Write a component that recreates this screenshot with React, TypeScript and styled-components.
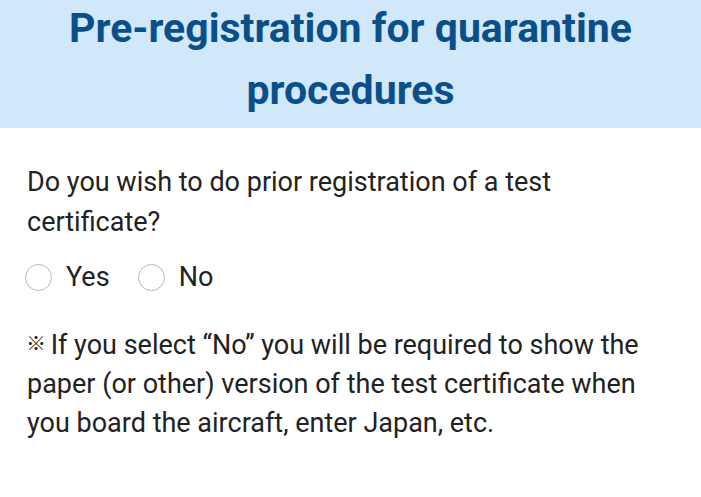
import React from "react";
import styled, { createGlobalStyle } from "styled-components";

const Global = createGlobalStyle`
  html, body { margin: 0; padding: 0; background: #ffffff; }
  body { font-family: Roboto, "Noto Sans", sans-serif; }
`;

const Page = styled.div`
  width: 701px;
  display: flex;
  flex-direction: column;
`;

const Header = styled.header`
  background: #d1e8fa;
  height: 128px;
  display: flex;
  align-items: center;
  justify-content: center;
  padding: 0 10px;
  box-sizing: border-box;
`;

const Title = styled.h1`
  margin: 0;
  font-family: Roboto, sans-serif;
  font-weight: 700;
  font-size: 41px;
  line-height: 62px;
  color: #0b4f8a;
  text-align: center;
  margin-top: -10px;
`;

const Body = styled.main`
  padding: 34px 27px 0 27px;
  display: flex;
  flex-direction: column;
`;

const Question = styled.p`
  margin: 0;
  font-size: 27px;
  line-height: 40px;
  color: #222222;
`;

const Options = styled.div`
  display: flex;
  gap: 30px;
  margin-top: 18px;
`;

const Option = styled.label`
  display: flex;
  align-items: center;
  gap: 14px;
  font-size: 27px;
  line-height: 34px;
  color: #222222;
`;

const Radio = styled.span`
  width: 27px;
  height: 27px;
  border-radius: 50%;
  border: 1.5px solid #b5b5b5;
  background: #ffffff;
  box-sizing: border-box;
  margin-left: -2px;
`;

const Note = styled.p`
  margin: 32px 0 0 0;
  font-size: 27px;
  line-height: 39px;
  color: #222222;
`;

const Mark = styled.span`
  display: inline-block;
  font-family: "Noto Sans CJK JP", sans-serif;
  font-size: 20px;
  line-height: 1;
  font-weight: 700;
  vertical-align: 3px;
  margin-left: -1px;
  margin-right: -2px;
`;

export default function App() {
  return (
    <Page>
      <Global />
      <Header>
        <Title>
          Pre-registration for quarantine
          <br />
          procedures
        </Title>
      </Header>
      <Body>
        <Question>
          Do you wish to do prior registration of a test
          <br />
          certificate?
        </Question>
        <Options>
          <Option>
            <Radio />
            Yes
          </Option>
          <Option>
            <Radio />
            No
          </Option>
        </Options>
        <Note>
          <Mark>※</Mark> If you select “No” you will be required to show the
          <br />
          paper (or other) version of the test certificate when
          <br />
          you board the aircraft, enter Japan, etc.
        </Note>
      </Body>
    </Page>
  );
}
